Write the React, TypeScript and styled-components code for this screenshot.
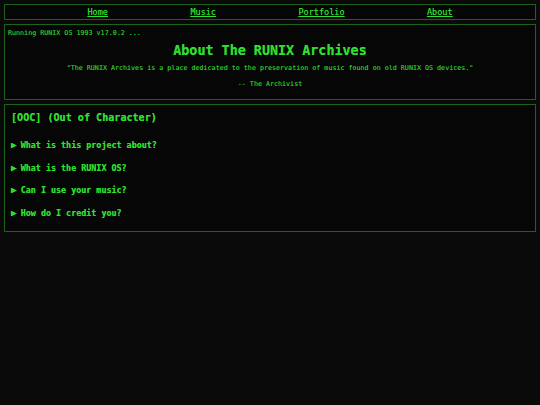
import React from "react";
import styled, { createGlobalStyle } from "styled-components";

const GREEN = "#2ee02e";
const DIM = "#27c427";
const EDGE = "#1d631d";

const GlobalStyle = createGlobalStyle`
  html, body {
    margin: 0;
    padding: 0;
    background: #0a0a0a;
  }
  body {
    font-family: "DejaVu Sans Mono", "Liberation Mono", monospace;
    color: ${GREEN};
    text-shadow: 0 0 0.6px rgba(46, 224, 46, 0.7);
  }
`;

const Page = styled.div`
  display: flex;
  flex-direction: column;
  gap: 4px;
  padding: 4px;
`;

const Panel = styled.section`
  border: 1px solid ${EDGE};
  background: #060606;
`;

const Nav = styled(Panel)`
  display: flex;
  justify-content: space-evenly;
  align-items: center;
  height: 14px;
`;

const NavLink = styled.a`
  color: ${GREEN};
  font-size: 8.5px;
  text-decoration: underline;
  cursor: pointer;
`;

const Intro = styled(Panel)`
  padding: 4px 3px 8px;
  height: 62px;
`;

const BootLine = styled.div`
  font-size: 6.7px;
  color: ${DIM};
  line-height: 8px;
`;

const Title = styled.h1`
  margin: 5px 0 0;
  text-align: center;
  font-size: 13.4px;
  line-height: 18px;
  font-weight: bold;
  color: ${GREEN};
`;

const Quote = styled.p<{ $gap: number }>`
  margin: ${(p) => p.$gap}px 0 0;
  text-align: center;
  font-size: 6.7px;
  line-height: 8px;
  color: ${DIM};
`;

const Faq = styled(Panel)`
  padding: 6px 6px 11px;
`;

const FaqHeading = styled.h2`
  margin: 0 0 13px;
  font-size: 10.1px;
  line-height: 14px;
  font-weight: bold;
  color: ${GREEN};
`;

const Entry = styled.details`
  margin-top: 8.7px;
`;

const Question = styled.summary`
  list-style: none;
  display: flex;
  align-items: center;
  gap: 4px;
  font-size: 8.4px;
  line-height: 14px;
  font-weight: bold;
  color: ${GREEN};
  cursor: pointer;

  &::-webkit-details-marker {
    display: none;
  }
`;

const Arrow = styled.span`
  font-size: 9.5px;
  line-height: 14px;
`;

const questions = [
  "What is this project about?",
  "What is the RUNIX OS?",
  "Can I use your music?",
  "How do I credit you?",
];

export default function App() {
  return (
    <>
      <GlobalStyle />
      <Page>
        <Nav as="nav">
          <NavLink>Home</NavLink>
          <NavLink>Music</NavLink>
          <NavLink>Portfolio</NavLink>
          <NavLink>About</NavLink>
        </Nav>
        <Intro>
          <BootLine>Running RUNIX OS 1993 v17.0.2 ...</BootLine>
          <Title>About The RUNIX Archives</Title>
          <Quote $gap={4}>
            "The RUNIX Archives is a place dedicated to the preservation of music found on old RUNIX OS devices."
          </Quote>
          <Quote $gap={8}>-- The Archivist</Quote>
        </Intro>
        <Faq>
          <FaqHeading>[OOC] (Out of Character)</FaqHeading>
          {questions.map((q) => (
            <Entry key={q}>
              <Question>
                <Arrow>▶</Arrow>
                {q}
              </Question>
            </Entry>
          ))}
        </Faq>
      </Page>
    </>
  );
}
